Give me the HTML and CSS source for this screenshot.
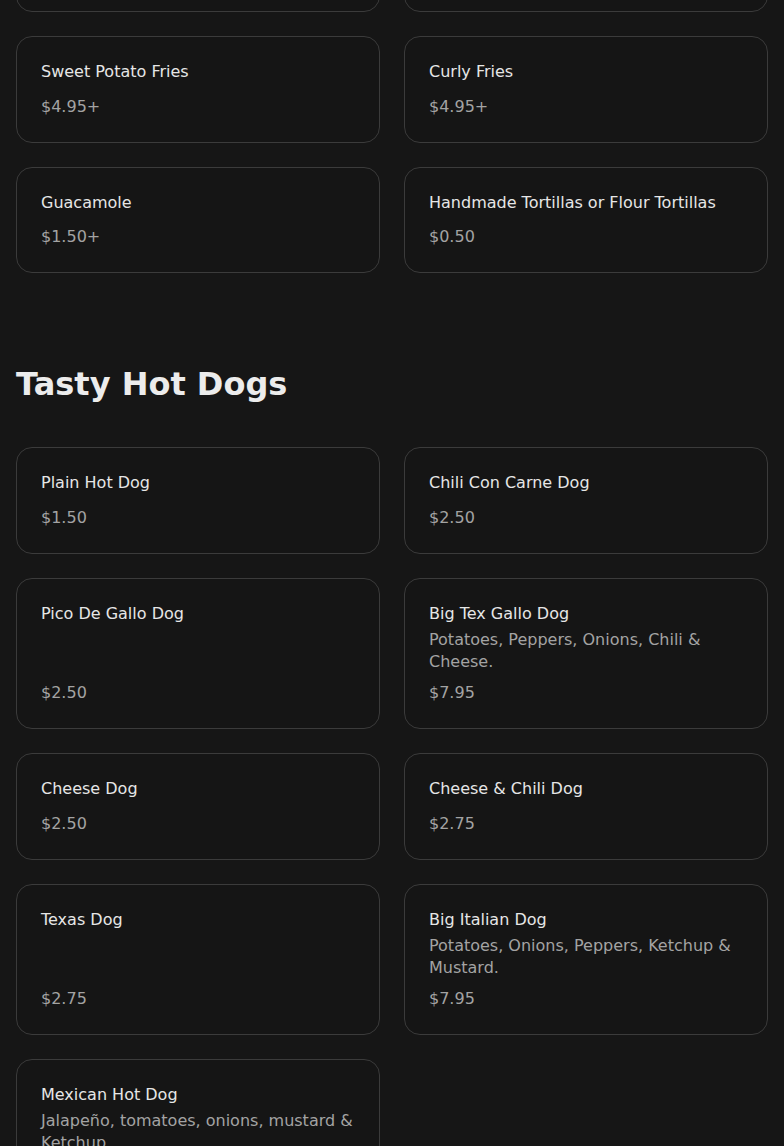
FILE: index.html
```html
<!DOCTYPE html>
<html lang="en">
<head>
<meta charset="utf-8">
<title>Menu</title>
<link rel="stylesheet" href="styles.css">
</head>
<body>
<main class="menu">
  <section class="section section-sides">
    <div class="grid">
      <div class="card"><div class="name">French Fries</div><div class="price">$3.95+</div></div>
      <div class="card"><div class="name">Onion Rings</div><div class="price">$4.95+</div></div>
      <div class="card"><div class="name">Sweet Potato Fries</div><div class="price">$4.95+</div></div>
      <div class="card"><div class="name">Curly Fries</div><div class="price">$4.95+</div></div>
      <div class="card"><div class="name">Guacamole</div><div class="price">$1.50+</div></div>
      <div class="card"><div class="name">Handmade Tortillas or Flour Tortillas</div><div class="price">$0.50</div></div>
    </div>
  </section>

  <section class="section">
    <h2 class="section-title">Tasty Hot Dogs</h2>
    <div class="grid">
      <div class="card"><div class="name">Plain Hot Dog</div><div class="price">$1.50</div></div>
      <div class="card"><div class="name">Chili Con Carne Dog</div><div class="price">$2.50</div></div>
      <div class="card"><div class="name">Pico De Gallo Dog</div><div class="price">$2.50</div></div>
      <div class="card"><div class="name">Big Tex Gallo Dog</div><div class="desc">Potatoes, Peppers, Onions, Chili &amp; Cheese.</div><div class="price">$7.95</div></div>
      <div class="card"><div class="name">Cheese Dog</div><div class="price">$2.50</div></div>
      <div class="card"><div class="name">Cheese &amp; Chili Dog</div><div class="price">$2.75</div></div>
      <div class="card"><div class="name">Texas Dog</div><div class="price">$2.75</div></div>
      <div class="card"><div class="name">Big Italian Dog</div><div class="desc">Potatoes, Onions, Peppers, Ketchup &amp; Mustard.</div><div class="price">$7.95</div></div>
      <div class="card"><div class="name">Mexican Hot Dog</div><div class="desc">Jalapeño, tomatoes, onions, mustard &amp; Ketchup.</div><div class="price">$3.50</div></div>
    </div>
  </section>
</main>
</body>
</html>
```

FILE: styles.css
```css
html, body {
  margin: 0;
  padding: 0;
  background: #161616;
}

body {
  font-family: "DejaVu Sans", "Liberation Sans", sans-serif;
  color: #e6e6e6;
}

.menu {
  padding: 0 16px 40px;
}

.section-sides {
  margin-top: -94.5px;
}

.section-title {
  margin: 92px 0 44px;
  font-size: 32px;
  line-height: 38px;
  font-weight: 700;
  color: #ececec;
}

.grid {
  display: grid;
  grid-template-columns: 1fr 1fr;
  gap: 24px;
}

.card {
  display: flex;
  flex-direction: column;
  border: 1px solid #3b3b3b;
  border-radius: 16px;
  padding: 24px;
  background: #151515;
}

.name {
  font-size: 16px;
  line-height: 22px;
  color: #e6e6e6;
}

.desc {
  margin-top: 4px;
  font-size: 16px;
  line-height: 22px;
  color: #a3a3a3;
}

.price {
  margin-top: auto;
  padding-top: 11.5px;
  font-size: 16px;
  line-height: 23px;
  color: #a3a3a3;
}

.desc + .price {
  padding-top: 8.5px;
}
```
